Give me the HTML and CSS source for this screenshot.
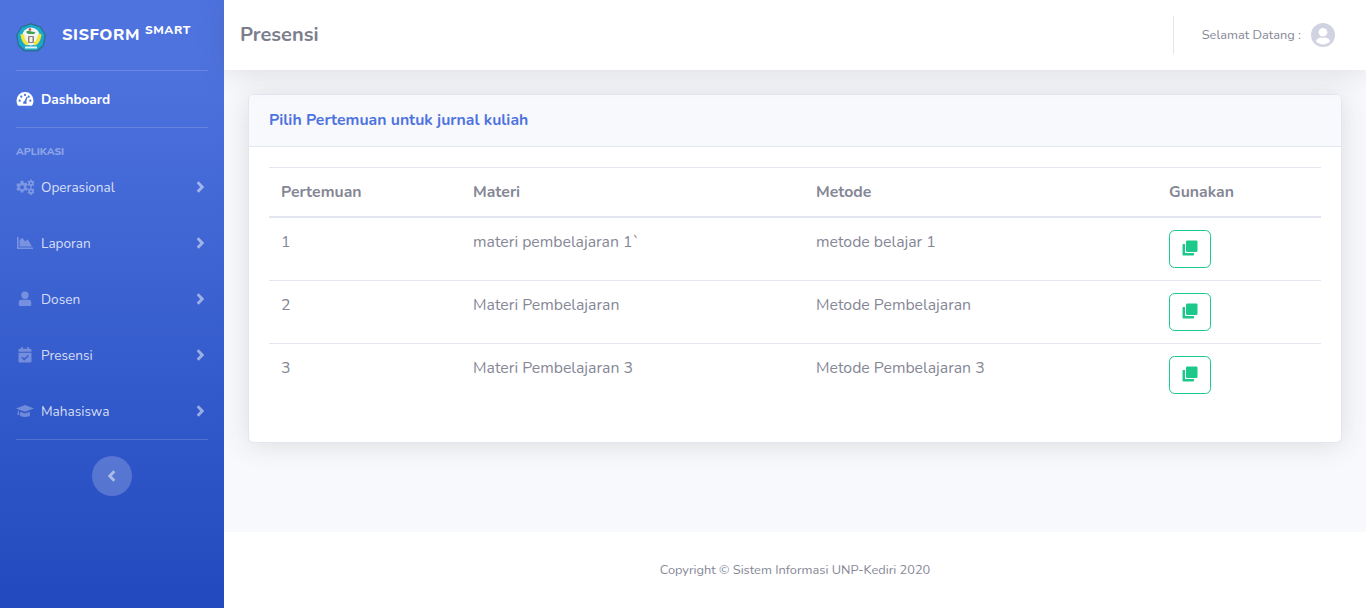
FILE: index.html
```html
<!DOCTYPE html>
<html lang="id">
<head>
<meta charset="utf-8">
<title>Presensi</title>
<link rel="stylesheet" href="styles.css">
</head>
<body>
<div class="page">
  <aside class="sidebar">
    <div class="brand">
      <svg class="logo" viewBox="0 0 30 30" width="30" height="30">
        <polygon points="15,0 25,3.500 30,12 28,23 22,28.500 8,28.500 2,23 0,12 5,3.500" fill="#2f6f96"/>
        <polygon points="15,1.500 24,4.500 28.500,12 26.800,22 21,27 9,27 3.200,22 1.500,12 6,4.500" fill="#1aa9c9"/>
        <circle cx="15" cy="13.500" r="9" fill="#f1f5f0"/>
        <path d="M4.500 11c.5 6 3 10.500 7 11.500l1-3c-2.500-1-4-4-4.500-8zM25.500 11c-.5 6-3 10.500-7 11.500l-1-3c2.500-1 4-4 4.500-8z" fill="#f3e53a"/>
        <path d="M10 9c1.500-1.500 3-1.500 4.500-.8s3 .3 5 1.300l-1.500 1.500h-6z" fill="#3f9f55"/>
        <rect x="12" y="13" width="6" height="7" rx="1" fill="#8d7f7a"/>
        <rect x="13.500" y="14" width="3" height="5" fill="#f4f4ee"/>
        <circle cx="14" cy="6.500" r="1.200" fill="#d8413a"/>
        <rect x="9" y="23.500" width="12" height="2" fill="#dff1f4"/>
      </svg>
      <div class="brand-text">SISFORM <sup class="brand-sup">SMART</sup></div>
    </div>
    <hr class="divider">
    <a class="nav-link active">
      <svg class="nav-icon" viewBox="0 0 18 16" width="18" height="16"><path fill="currentColor" fill-rule="evenodd" d="M9 1a8.500 8.500 0 0 0-8.500 8.500c0 1.700.4 3.300 1.200 4.700.2.300.5.500.9.500h12.800c.4 0 .7-.2.9-.5.8-1.400 1.200-3 1.200-4.700A8.500 8.500 0 0 0 9 1zM9 2.800a1.100 1.100 0 1 1 0 2.200 1.100 1.100 0 0 1 0-2.200zM3.700 10.800a1.100 1.100 0 1 1 0-2.200 1.100 1.100 0 0 1 0 2.200zM5.300 6.800a1.100 1.100 0 1 1 0-2.200 1.100 1.100 0 0 1 0 2.200zM10.600 12.800H7.400a1.700 1.700 0 0 1 1-2.600l2.200-4.500 1 .4-1.400 4.700c.6.500.7 1.400.4 2zM12.700 4.600a1.100 1.100 0 1 1 0 2.200 1.100 1.100 0 0 1 0-2.200zM14.300 10.800a1.100 1.100 0 1 1 0-2.200 1.100 1.100 0 0 1 0 2.200z"/></svg>
      <span>Dashboard</span>
    </a>
    <hr class="divider">
    <div class="nav-heading">APLIKASI</div>
    <a class="nav-link">
      <svg class="nav-icon" viewBox="0 0 18 16" width="18" height="16"><g fill="currentColor"><path fill-rule="evenodd" d="M4.700 1.800h2.600l.4 1.800 1 .6 1.800-.6 1.300 2.300-1.400 1.200v1.200l1.400 1.200-1.300 2.300-1.800-.6-1 .6-.4 1.800H4.700l-.4-1.800-1-.6-1.800.6L.2 10.100l1.400-1.200V7.700L.2 6.500l1.300-2.300 1.800.6 1-.6zM6 6.200a2.100 2.100 0 1 0 0 4.200 2.100 2.100 0 0 0 0-4.200z"/><path fill-rule="evenodd" d="M14.200.5h1.600l.2 1.200.8.400 1.100-.4.600 1.300-.9.800v.9l.9.800-.6 1.300-1.100-.4-.8.400-.2 1.200h-1.600l-.2-1.200-.8-.4-1.100.4-.6-1.300.9-.8v-.9l-.9-.8.600-1.300 1.100.4.800-.4zM15 3.300a.9.900 0 1 0 0 1.800.9.900 0 0 0 0-1.800z"/><path fill-rule="evenodd" d="M14.200 8.500h1.600l.2 1.200.8.400 1.100-.4.600 1.300-.9.800v.9l.9.800-.6 1.300-1.100-.4-.8.400-.2 1.200h-1.600l-.2-1.200-.8-.4-1.100.4-.6-1.300.9-.8v-.9l-.9-.8.600-1.300 1.100.4.800-.4zM15 11.300a.9.900 0 1 0 0 1.800.9.900 0 0 0 0-1.800z"/></g></svg>
      <span>Operasional</span>
      <svg class="chev" viewBox="0 0 8 12" width="8" height="12"><path d="M1.700 1.200 6.200 6l-4.500 4.800" fill="none" stroke="currentColor" stroke-width="2.800"/></svg>
    </a>
    <a class="nav-link">
      <svg class="nav-icon" viewBox="0 0 18 16" width="18" height="16"><path fill="currentColor" d="M1 2h1.600v10.400H17V14H1zM3.600 11.400V5l2.700-2 3 3.400 2.400-2.200 4.300 7.200z"/></svg>
      <span>Laporan</span>
      <svg class="chev" viewBox="0 0 8 12" width="8" height="12"><path d="M1.700 1.200 6.200 6l-4.500 4.800" fill="none" stroke="currentColor" stroke-width="2.800"/></svg>
    </a>
    <a class="nav-link">
      <svg class="nav-icon" viewBox="0 0 18 16" width="18" height="16"><path fill="currentColor" d="M9 .5a3.700 3.700 0 1 1 0 7.400A3.700 3.700 0 0 1 9 .5zM5.500 8.800h7c1.700 0 2.800 1.200 2.800 2.900v1.800c0 1-.6 1.500-1.500 1.500H4.200c-.9 0-1.500-.5-1.500-1.500v-1.800c0-1.700 1.100-2.900 2.800-2.900z"/></svg>
      <span>Dosen</span>
      <svg class="chev" viewBox="0 0 8 12" width="8" height="12"><path d="M1.700 1.200 6.200 6l-4.500 4.800" fill="none" stroke="currentColor" stroke-width="2.800"/></svg>
    </a>
    <a class="nav-link">
      <svg class="nav-icon" viewBox="0 0 18 16" width="18" height="16"><path fill="currentColor" fill-rule="evenodd" d="M5 0h1.700v1.700h4.600V0H13v1.700h1.200c.7 0 1.300.6 1.300 1.300v1.800h-13V3c0-.7.6-1.300 1.300-1.300H5zM2.500 5.800h13v8.400c0 .7-.6 1.300-1.300 1.300H3.800c-.7 0-1.300-.6-1.300-1.300zM12 8 8.200 11.500 6.300 9.800l-.9.900 2.800 2.700 4.700-4.500z"/></svg>
      <span>Presensi</span>
      <svg class="chev" viewBox="0 0 8 12" width="8" height="12"><path d="M1.700 1.200 6.200 6l-4.500 4.800" fill="none" stroke="currentColor" stroke-width="2.800"/></svg>
    </a>
    <a class="nav-link">
      <svg class="nav-icon" viewBox="0 0 18 16" width="18" height="16"><path fill="currentColor" d="M9 2 18 5.400 9 8.800 3.500 6.700c-.5.500-.7 1.100-.8 1.700.3.200.4.500.3.800l.4 2.700H1.400l.4-2.700c0-.3 0-.6.300-.8.100-.8.300-1.500.8-2L0 5.400zM4.300 8.800 9 10.400l4.700-1.600.4 3.200c0 1.100-2.300 2-5.100 2s-5.100-.9-5.100-2z"/></svg>
      <span>Mahasiswa</span>
      <svg class="chev" viewBox="0 0 8 12" width="8" height="12"><path d="M1.700 1.200 6.200 6l-4.500 4.800" fill="none" stroke="currentColor" stroke-width="2.800"/></svg>
    </a>
    <hr class="divider end">
    <div class="toggle-wrap">
      <button class="toggle"><svg viewBox="0 0 8 12" width="8" height="12"><path d="M6.300 1.200 1.800 6l4.500 4.800" fill="none" stroke="currentColor" stroke-width="2.800"/></svg></button>
    </div>
  </aside>
  <div class="main">
    <header class="topbar">
      <h1 class="title">Presensi</h1>
      <div class="user">
        <span class="greet">Selamat Datang :</span>
        <svg class="avatar" viewBox="0 0 24 24" width="24" height="24"><circle cx="12" cy="12" r="12" fill="#d1d3e2"/><circle cx="12" cy="9.300" r="4.300" fill="#fff"/><path d="M4.800 18.300c1.200-2.600 3.500-3.700 5-3.700.7.300 1.400.4 2.200.4s1.500-.1 2.200-.4c1.500 0 3.800 1.100 5 3.700a9.800 9.800 0 0 1-14.400 0z" fill="#fff"/></svg>
      </div>
    </header>
    <main class="content">
      <section class="card">
        <div class="card-head">Pilih Pertemuan untuk jurnal kuliah</div>
        <div class="card-body">
          <table class="table">
            <colgroup><col class="c1"><col class="c2"><col class="c3"><col class="c4"></colgroup>
            <thead>
              <tr><th>Pertemuan</th><th>Materi</th><th>Metode</th><th>Gunakan</th></tr>
            </thead>
            <tbody>
              <tr><td>1</td><td>materi pembelajaran 1`</td><td>metode belajar 1</td><td><button class="use"><svg viewBox="0 0 16 16" width="16" height="16"><path fill="currentColor" d="M1.500 4H3v8.500c0 .3.200.5.500.5H12v1.500c0 .6-.4 1-1 1H1.500c-.6 0-1-.4-1-1V5c0-.6.4-1 1-1z"/><rect x="4" y="0.500" width="11.500" height="11.500" rx="1.300" fill="currentColor"/></svg></button></td></tr>
              <tr><td>2</td><td>Materi Pembelajaran</td><td>Metode Pembelajaran</td><td><button class="use"><svg viewBox="0 0 16 16" width="16" height="16"><path fill="currentColor" d="M1.500 4H3v8.500c0 .3.200.5.500.5H12v1.500c0 .6-.4 1-1 1H1.500c-.6 0-1-.4-1-1V5c0-.6.4-1 1-1z"/><rect x="4" y="0.500" width="11.500" height="11.500" rx="1.300" fill="currentColor"/></svg></button></td></tr>
              <tr><td>3</td><td>Materi Pembelajaran 3</td><td>Metode Pembelajaran 3</td><td><button class="use"><svg viewBox="0 0 16 16" width="16" height="16"><path fill="currentColor" d="M1.500 4H3v8.500c0 .3.200.5.500.5H12v1.500c0 .6-.4 1-1 1H1.500c-.6 0-1-.4-1-1V5c0-.6.4-1 1-1z"/><rect x="4" y="0.500" width="11.500" height="11.500" rx="1.300" fill="currentColor"/></svg></button></td></tr>
            </tbody>
          </table>
        </div>
      </section>
    </main>
    <footer class="footer">Copyright © Sistem Informasi UNP-Kediri 2020</footer>
  </div>
</div>
</body>
</html>
```
FILE: styles.css
```css
* { box-sizing: border-box; }
html, body { margin: 0; height: 100%; }
body { font-family: "Nunito", "Lato", "Open Sans", sans-serif; color: #858796; background: #f8f9fc; overflow: hidden; }
.page { display: flex; height: 608px; }

.sidebar { width: 224px; flex: none; padding: 0 16px; background: linear-gradient(180deg, #4e73df 10%, #224abe 100%); color: #fff; display: flex; flex-direction: column; }
.brand { height: 70px; display: flex; align-items: center; gap: 16px; }
.logo { flex: none; margin-top: 6px; }
.brand-text { font-size: 16.500px; font-weight: 800; letter-spacing: 0.5px; line-height: 20px; white-space: nowrap; }
.brand-sup { font-size: 12px; font-weight: 800; letter-spacing: 0.6px; position: relative; top: 0; vertical-align: super; line-height: 0; margin-left: 0; }
.divider { margin: 0; border: 0; border-top: 1px solid rgba(255,255,255,.15); flex: none; }
.nav-link { height: 56px; flex: none; display: flex; align-items: center; font-size: 13.600px; color: rgba(255,255,255,.8); }
.nav-link span { margin-left: 7px; flex: 1; }
.nav-icon { flex: none; color: rgba(255,255,255,.3); }
.nav-link.active { color: #fff; font-weight: 700; }
.nav-link.active .nav-icon { color: #fff; }
.chev { flex: none; color: rgba(255,255,255,.5); margin-right: 4px; }
.nav-heading { font-size: 10.400px; font-weight: 800; color: rgba(255,255,255,.4); height: 31px; padding-top: 17px; line-height: 13px; }
.toggle-wrap { display: flex; justify-content: center; padding-top: 16px; }
.toggle { width: 40px; height: 40px; border: 0; padding: 0; border-radius: 50%; background: rgba(255,255,255,.2); color: rgba(255,255,255,.5); display: flex; align-items: center; justify-content: center; }

.main { flex: 1; min-width: 0; display: flex; flex-direction: column; }
.topbar { height: 70px; flex: none; background: #fff; display: flex; align-items: center; justify-content: space-between; padding: 0 31px 0 16px; box-shadow: 0 2px 28px rgba(58,59,69,.15); position: relative; }
.title { margin: 0; font-size: 20px; font-weight: 700; color: #7c7e8d; line-height: 1.2; }
.user { display: flex; align-items: center; height: 38px; border-left: 1px solid #e3e6f0; padding-left: 28px; gap: 10px; }
.greet { font-size: 12.800px; color: #858796; }
.avatar { flex: none; }
.content { flex: 1; padding: 24px 24px 0; }
.card { background: #fff; border: 1px solid #e3e6f0; border-radius: 5.600px; box-shadow: 0 2px 28px rgba(58,59,69,.15); overflow: hidden; height: 349px; }
.card-head { height: 52px; background: #f8f9fc; border-bottom: 1px solid #e3e6f0; padding: 0 20px; line-height: 50px; font-size: 15.800px; font-weight: 700; color: #4e73df; }
.card-body { padding: 20px; }
.table { width: 100%; table-layout: fixed; border-collapse: collapse; font-size: 15.800px; color: #858796; }
.c1 { width: 192px; } .c2 { width: 343px; } .c3 { width: 353px; } .c4 { width: 164px; }
th { height: 49px; padding: 0 12px; text-align: left; font-weight: 700; border-top: 1px solid #e3e6f0; border-bottom: 2px solid #e3e6f0; }
td { height: 63px; padding: 12px; vertical-align: top; border-bottom: 1px solid #e3e6f0; line-height: 24px; }
tbody tr:last-child td { border-bottom: 0; }
.use { width: 42px; height: 38px; display: flex; align-items: center; justify-content: center; padding: 0 0 2px; background: #fff; border: 1px solid #1cc88a; border-radius: 5.600px; color: #1cc88a; }
.footer { height: 76px; flex: none; background: #fff; display: flex; align-items: center; justify-content: center; font-size: 12.800px; color: #858796; }
```
